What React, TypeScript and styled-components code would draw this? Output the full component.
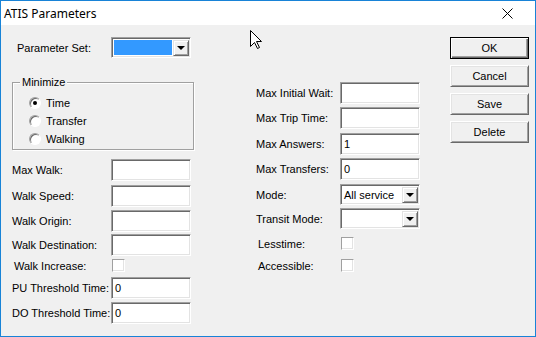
import React from "react";
import styled, { createGlobalStyle } from "styled-components";

const Global = createGlobalStyle`
  html, body { margin: 0; padding: 0; background: #fff; }
  body { font-family: "Liberation Sans", Arial, sans-serif; font-size: 11px; color: #000; }
`;

const Window = styled.div`
  position: relative;
  width: 536px;
  height: 337px;
  box-sizing: border-box;
  border: 1px solid #1883d7;
  background: #f0f0f0;
  display: flex;
  flex-direction: column;
`;

const TitleBar = styled.div`
  height: 24px;
  flex: none;
  background: #fff;
  display: flex;
  align-items: center;
  justify-content: space-between;
  padding: 0 22px 0 3px;
  font-family: "Noto Sans", "Liberation Sans", sans-serif;
  font-size: 12px;
`;

const Body = styled.div`
  flex: 1;
  display: flex;
  align-items: flex-start;
`;

const Column = styled.div<{ $ml: number; $w: number; $pt: number }>`
  margin-left: ${(p) => p.$ml}px;
  width: ${(p) => p.$w}px;
  padding-top: ${(p) => p.$pt}px;
  display: flex;
  flex-direction: column;
`;

const Row = styled.div<{ $mt: number; $h?: number }>`
  display: flex;
  align-items: center;
  margin-top: ${(p) => p.$mt}px;
  height: ${(p) => p.$h ?? 22}px;
`;

const Label = styled.span<{ $w: number; $pl?: number }>`
  flex: none;
  width: ${(p) => p.$w}px;
  padding-left: ${(p) => p.$pl ?? 0}px;
  box-sizing: border-box;
  white-space: nowrap;
`;

const Field = styled.div<{ $h?: number }>`
  width: 80px;
  height: ${(p) => p.$h ?? 22}px;
  box-sizing: border-box;
  background: #fff;
  border-style: solid;
  border-width: 1px;
  border-color: #a0a0a0 #fff #fff #a0a0a0;
  box-shadow: inset 1px 1px 0 #696969, inset -1px -1px 0 #e3e3e3;
  display: flex;
  align-items: center;
  padding: 0 0 0 3px;
  position: relative;
`;

const Selected = styled.div`
  position: absolute;
  left: 2px;
  top: 2px;
  bottom: 2px;
  right: 18px;
  background: #3399ff;
`;

const DropBtn = styled.div`
  position: absolute;
  right: 1px;
  top: 2px;
  bottom: 1px;
  width: 16px;
  box-sizing: border-box;
  background: #f0f0f0;
  border-style: solid;
  border-width: 1px;
  border-color: #e3e3e3 #696969 #696969 #e3e3e3;
  box-shadow: inset 1px 1px 0 #fff, inset -1px -1px 0 #a0a0a0;
  display: flex;
  align-items: center;
  justify-content: center;
  &::after {
    content: "";
    border-left: 4px solid transparent;
    border-right: 4px solid transparent;
    border-top: 4px solid #000;
  }
`;

const Check = styled.div`
  width: 13px;
  height: 13px;
  box-sizing: border-box;
  background: #fff;
  border-style: solid;
  border-width: 1px;
  border-color: #a0a0a0 #fff #fff #a0a0a0;
  box-shadow: inset -1px -1px 0 #e3e3e3;
`;

const Group = styled.div`
  position: relative;
  margin-top: 24px;
  height: 68px;
  box-sizing: border-box;
  border: 1px solid #a0a0a0;
  box-shadow: inset 1px 1px 0 #fff, 1px 1px 0 #fff;
  padding: 11px 0 0 16px;
  display: flex;
  flex-direction: column;
`;

const Legend = styled.span`
  position: absolute;
  top: -7px;
  left: 7px;
  padding: 0 2px;
  background: #f0f0f0;
`;

const RadioRow = styled.div`
  display: flex;
  align-items: center;
  height: 18px;
  gap: 5px;
`;

const Radio = styled.div<{ $on?: boolean }>`
  width: 12px;
  height: 12px;
  box-sizing: border-box;
  border-radius: 50%;
  background: #fff;
  border: 1px solid;
  border-color: #a0a0a0 #fff #fff #a0a0a0;
  box-shadow: inset 1px 1px 0 #696969;
  display: flex;
  align-items: center;
  justify-content: center;
  &::after {
    content: "";
    display: ${(p) => (p.$on ? "block" : "none")};
    width: 4px;
    height: 4px;
    border-radius: 50%;
    background: #000;
  }
`;

const Button = styled.div<{ $def?: boolean; $mt: number }>`
  margin-top: ${(p) => p.$mt}px;
  width: 79px;
  height: 22px;
  box-sizing: border-box;
  background: #f0f0f0;
  border: 1px solid;
  border-color: ${(p) => (p.$def ? "#000" : "#fff #696969 #696969 #fff")};
  box-shadow: ${(p) =>
    p.$def
      ? "inset 1px 1px 0 #fff, inset -1px -1px 0 #696969, inset -2px -2px 0 #a0a0a0"
      : "inset 1px 1px 0 #e3e3e3, inset -1px -1px 0 #a0a0a0"};
  display: flex;
  align-items: center;
  justify-content: center;
`;

const Cursor = styled.svg`
  position: absolute;
  left: 249px;
  top: 29px;
`;

const leftRows = [
  { label: "Max Walk:", mt: 9, value: "" },
  { label: "Walk Speed:", mt: 4, value: "" },
  { label: "Walk Origin:", mt: 3, value: "" },
  { label: "Walk Destination:", mt: 2, value: "" },
];

const rightRows = [
  { label: "Max Initial Wait:", mt: 0, value: "" },
  { label: "Max Trip Time:", mt: 3, value: "" },
  { label: "Max Answers:", mt: 4, value: "1" },
  { label: "Max Transfers:", mt: 3, value: "0" },
];

export default function App() {
  return (
    <>
      <Global />
      <Window>
        <TitleBar>
          <span>ATIS Parameters</span>
          <svg width="11" height="11" viewBox="0 0 11 11">
            <path d="M0.5 0.5 L10.5 10.5 M10.5 0.5 L0.5 10.5" stroke="#000" strokeWidth="1" />
          </svg>
        </TitleBar>
        <Body>
          <Column $ml={11} $w={182} $pt={12}>
            <Row $mt={0} $h={21}>
              <Label $w={99} $pl={5}>Parameter Set:</Label>
              <Field $h={21}>
                <Selected />
                <DropBtn />
              </Field>
            </Row>
            <Group>
              <Legend>Minimize</Legend>
              <RadioRow>
                <Radio $on />
                Time
              </RadioRow>
              <RadioRow>
                <Radio />
                Transfer
              </RadioRow>
              <RadioRow>
                <Radio />
                Walking
              </RadioRow>
            </Group>
            {leftRows.map((r) => (
              <Row key={r.label} $mt={r.mt}>
                <Label $w={99}>{r.label}</Label>
                <Field>{r.value}</Field>
              </Row>
            ))}
            <Row $mt={3} $h={13}>
              <Label $w={100} $pl={2}>Walk Increase:</Label>
              <Check />
            </Row>
            <Row $mt={5}>
              <Label $w={99}>PU Threshold Time:</Label>
              <Field>0</Field>
            </Row>
            <Row $mt={3}>
              <Label $w={99}>DO Threshold Time:</Label>
              <Field>0</Field>
            </Row>
          </Column>
          <Column $ml={62} $w={164} $pt={57}>
            {rightRows.map((r) => (
              <Row key={r.label} $mt={r.mt}>
                <Label $w={84}>{r.label}</Label>
                <Field>{r.value}</Field>
              </Row>
            ))}
            <Row $mt={4} $h={21}>
              <Label $w={84}>Mode:</Label>
              <Field $h={21}>
                All service
                <DropBtn />
              </Field>
            </Row>
            <Row $mt={3} $h={21}>
              <Label $w={84}>Transit Mode:</Label>
              <Field $h={21}>
                <DropBtn />
              </Field>
            </Row>
            <Row $mt={8} $h={13}>
              <Label $w={85} $pl={2}>Lesstime:</Label>
              <Check />
            </Row>
            <Row $mt={9} $h={13}>
              <Label $w={85} $pl={2}>Accessible:</Label>
              <Check />
            </Row>
          </Column>
          <Column $ml={30} $w={79} $pt={12}>
            <Button $def $mt={0}>OK</Button>
            <Button $mt={6}>Cancel</Button>
            <Button $mt={6}>Save</Button>
            <Button $mt={6}>Delete</Button>
          </Column>
        </Body>
        <Cursor width="13" height="20" viewBox="0 0 13 20">
          <path
            d="M0.5 0.5 L0.5 16.5 L4.5 12.5 L7.5 18.5 L9.5 17.5 L6.5 11.5 L11.5 11.5 Z"
            fill="#fff"
            stroke="#000"
            strokeWidth="1"
          />
        </Cursor>
      </Window>
    </>
  );
}
